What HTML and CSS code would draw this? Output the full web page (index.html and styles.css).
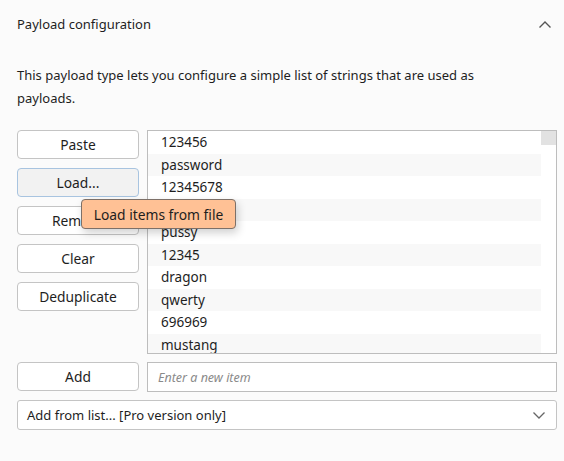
FILE: index.html
```html
<!DOCTYPE html>
<html>
<head>
<meta charset="utf-8">
<link rel="stylesheet" href="styles.css">
</head>
<body>
<div class="panel">
  <div class="header">
    <span class="title">Payload configuration</span>
    <svg class="chev-up" width="14" height="9" viewBox="0 0 14 9"><path d="M1.5 7.5 L7 2 L12.5 7.5" fill="none" stroke="#555" stroke-width="1.4"/></svg>
  </div>
  <p class="desc">This payload type lets you configure a simple list of strings that are used as payloads.</p>
  <div class="main">
    <div class="buttons">
      <button class="btn">Paste</button>
      <button class="btn hover">Load...</button>
      <button class="btn">Remove</button>
      <button class="btn">Clear</button>
      <button class="btn">Deduplicate</button>
    </div>
    <div class="list">
      <div class="rows">
        <div class="row">123456</div>
        <div class="row">password</div>
        <div class="row">12345678</div>
        <div class="row">1234</div>
        <div class="row">pussy</div>
        <div class="row">12345</div>
        <div class="row">dragon</div>
        <div class="row">qwerty</div>
        <div class="row">696969</div>
        <div class="row">mustang</div>
      </div>
      <div class="scroll"><div class="thumb"></div></div>
    </div>
    <div class="tooltip">Load items from file</div>
  </div>
  <div class="addrow">
    <button class="btn">Add</button>
    <div class="input">Enter a new item</div>
  </div>
  <div class="select">
    <span>Add from list... [Pro version only]</span>
    <svg width="14" height="9" viewBox="0 0 14 9"><path d="M1.5 1.5 L7 7 L12.5 1.5" fill="none" stroke="#666" stroke-width="1.3"/></svg>
  </div>
</div>
</body>
</html>
```

FILE: styles.css
```css
html, body {
  margin: 0;
  padding: 0;
  background: #fbfbfb;
}
body {
  font-family: "Noto Sans", "Open Sans", sans-serif;
  font-size: 13px;
  color: #1e1e1e;
}
.panel {
  padding: 0 7px 0 17px;
}
.header {
  height: 48px;
  display: flex;
  align-items: center;
  justify-content: space-between;
  padding-right: 5px;
}
.title {
  font-size: 13px;
}
.desc {
  margin: 16px 0 0 0;
  line-height: 23px;
  font-size: 13px;
  width: 480px;
}
.main {
  position: relative;
  display: flex;
  gap: 8px;
  margin-top: 20px;
}
.buttons {
  display: flex;
  flex-direction: column;
  gap: 9px;
  width: 122px;
}
.btn {
  height: 29px;
  width: 122px;
  background: #ffffff;
  border: 1px solid #c4c4c4;
  border-radius: 4px;
  font-family: inherit;
  font-size: 13.8px;
  color: #1e1e1e;
  padding: 0;
}
.btn.hover {
  background: #f2f2f2;
  border-color: #a8c4e0;
}
.list {
  flex: 1;
  height: 222px;
  border: 1px solid #bdbdbd;
  background: #ffffff;
  display: flex;
  overflow: hidden;
}
.rows {
  flex: 1;
}
.row {
  height: 22.5px;
  line-height: 22.5px;
  padding-left: 13px;
  font-size: 13.5px;
}
.row:nth-child(even) {
  background: #f8f8f8;
}
.scroll {
  width: 15px;
}
.thumb {
  height: 14px;
  background: #e2e2e2;
}
.tooltip {
  position: absolute;
  left: 64px;
  top: 69px;
  width: 155px;
  height: 30px;
  box-sizing: border-box;
  background: #ffc195;
  border: 1px solid #7d7068;
  border-radius: 4px;
  display: flex;
  align-items: center;
  justify-content: center;
  font-size: 13.8px;
  box-shadow: 2px 4px 8px rgba(0,0,0,0.18);
}
.addrow {
  display: flex;
  gap: 8px;
  margin-top: 8px;
}
.input {
  flex: 1;
  height: 30px;
  box-sizing: border-box;
  border: 1px solid #bdbdbd;
  background: #ffffff;
  padding-left: 10px;
  display: flex;
  align-items: center;
  font-style: italic;
  color: #8a8a8a;
  font-size: 12.5px;
}
.select {
  margin-top: 8px;
  height: 30px;
  box-sizing: border-box;
  border: 1px solid #c4c4c4;
  border-radius: 3px;
  background: #ffffff;
  display: flex;
  align-items: center;
  justify-content: space-between;
  padding: 0 10px 0 9px;
  font-size: 13px;
}
```
